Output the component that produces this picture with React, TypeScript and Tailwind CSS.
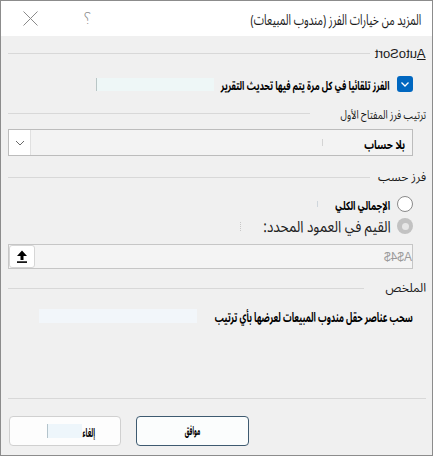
import React from "react";

const font = { fontFamily: '"Noto Sans Arabic UI", "Noto Sans Arabic", "DejaVu Sans Condensed", "DejaVu Sans", sans-serif' };
const latin = { fontFamily: '"Liberation Sans", sans-serif' };

export default function App() {
  return (
    <div
      dir="rtl"
      style={font}
      className="w-[433px] h-[456px] border border-[#8c8c8c] bg-[#f0f0f0] flex flex-col overflow-hidden"
    >
      {/* Title bar */}
      <div className="h-[35px] bg-white flex items-center justify-between pr-[11px] pl-[21px] shrink-0">
        <div className="w-[171px] shrink-0 whitespace-nowrap">
          <span className="inline-block origin-right scale-x-[0.69] text-[15px] leading-none text-[#1a1a1a]">
            المزيد من خيارات الفرز (مندوب المبيعات)
          </span>
        </div>
        <div className="flex items-center gap-[44px]" dir="ltr">
          <svg width="17" height="17" viewBox="0 0 17 17">
            <path d="M1.5 1.5 L15.5 15.5 M15.5 1.5 L1.5 15.5" stroke="#8a8a8a" strokeWidth="1" fill="none" />
          </svg>
          <span className="text-[16px] leading-none text-[#8a8a8a] font-light scale-x-[-1] inline-block" style={{ fontFamily: '"DejaVu Sans", sans-serif' }}>?</span>
        </div>
      </div>

      {/* Body */}
      <div className="flex-1 flex flex-col pr-[6px] pl-[7px]">
        {/* AutoSort header */}
        <div className="mt-[9px] flex items-center h-[16px] gap-[5px]">
          <span className="text-[13px] leading-none text-[#1a1a1a] whitespace-nowrap inline-block scale-x-[-1]" style={latin}>
            <span className="underline">A</span>utoSort
          </span>
          <div className="flex-1 h-px bg-[#d8d8d8]" />
        </div>

        {/* checkbox row */}
        <div className="mt-[15px] h-[16px] flex items-center gap-[8px] pr-[13px]">
          <div className="w-[16px] h-[16px] rounded-[3px] bg-[#0067c0] flex items-center justify-center shrink-0">
            <svg width="10" height="10" viewBox="0 0 10 10">
              <path d="M1.5 3.5 L5 7 L8.5 3.5" stroke="white" strokeWidth="1.3" fill="none" />
            </svg>
          </div>
          <div className="w-[175px] shrink-0 whitespace-nowrap">
            <span className="inline-block origin-right scale-x-[0.71] text-[12px] font-bold leading-none text-black">
              الفرز تلقائيا في كل مرة يتم فيها تحديث التقرير
            </span>
          </div>
          <div className="-mr-[8px] w-[118px] h-[13px] bg-[#eef7f7] border-l border-[#b9c6c6]" />
        </div>

        {/* header 2 */}
        <div className="mt-[13px] flex items-center h-[16px] gap-[21px]">
          <div className="w-[95px] shrink-0 whitespace-nowrap">
            <span className="inline-block origin-right scale-x-[0.77] text-[12px] leading-none text-[#1a1a1a]">
              ترتيب فرز المفتاح الأول
            </span>
          </div>
          <div className="flex-1 h-px bg-[#d8d8d8]" />
        </div>

        {/* dropdown */}
        <div className="mt-[8px] mr-[13px] h-[27px] border border-[#bcbcbc] bg-[#f3f3f3] flex items-center">
          <div className="w-[40px] mr-[7px] shrink-0 whitespace-nowrap">
            <span className="inline-block origin-right scale-x-[0.8] text-[12px] font-bold text-black leading-none">بلا حساب</span>
          </div>
          <div className="mr-[42px] w-px h-[7px] bg-[#d4d4d4]" />
          <div className="mr-auto w-[22px] h-full bg-white border-r border-[#e0e0e0] flex items-center justify-center">
            <svg width="10" height="6" viewBox="0 0 10 6">
              <path d="M1 1 L5 5 L9 1" stroke="#6a6a6a" strokeWidth="1" fill="none" />
            </svg>
          </div>
        </div>

        {/* header 3 */}
        <div className="mt-[13px] flex items-center h-[16px] gap-[8px]">
          <span className="text-[12px] leading-none text-[#1a1a1a] whitespace-nowrap">فرز حسب</span>
          <div className="flex-1 h-px bg-[#d8d8d8]" />
        </div>

        {/* radio 1 */}
        <div className="mt-[11px] h-[16px] flex items-center gap-[7px] pr-[13px]">
          <div className="w-[16px] h-[16px] rounded-full border border-[#8a8a8a] bg-white shrink-0" />
          <div className="w-[56px] shrink-0 whitespace-nowrap">
            <span className="inline-block origin-right scale-x-[0.74] text-[12px] font-bold leading-none text-black">الإجمالي الكلي</span>
          </div>
          <div className="mr-[9px] w-px h-[6px] bg-[#cfd6dc]" />
        </div>

        {/* radio 2 */}
        <div className="mt-[6px] h-[16px] flex items-center gap-[6px] pr-[13px]">
          <div className="w-[16px] h-[16px] rounded-full bg-[#c2c2c2] flex items-center justify-center shrink-0">
            <div className="w-[7px] h-[7px] rounded-full bg-[#e6e6e6]" />
          </div>
          <div className="w-[128px] shrink-0 whitespace-nowrap">
            <span className="inline-block origin-right scale-x-[0.84] text-[16px] leading-none text-[#222]">القيم في العمود المحدد:</span>
          </div>
          <div className="mr-[16px] w-px h-[9px] border-l border-dotted border-[#c8c8c8]" />
        </div>

        {/* input */}
        <div className="mt-[10px] mr-[13px] h-[25px] border border-[#c6c6c6] bg-[#f4f4f4] flex items-center justify-between">
          <span className="text-[12px] leading-none text-[#9a9a9a] pr-[3px] inline-block scale-x-[-1]" style={latin}>
            $A$4
          </span>
          <div className="w-[26px] h-full bg-white border border-[#d6d6d6] rounded-[3px] flex items-center justify-center">
            <svg width="12" height="13" viewBox="0 0 12 13">
              <path d="M6 0.5 L11 6 L7.5 6 L7.5 10 L4.5 10 L4.5 6 L1 6 Z" fill="#000" />
              <rect x="1" y="11.3" width="10" height="1.6" fill="#000" />
            </svg>
          </div>
        </div>

        {/* header 4 */}
        <div className="mt-[11px] flex items-center h-[16px] gap-[22px]">
          <span className="text-[12px] leading-none text-[#1a1a1a] whitespace-nowrap">الملخص</span>
          <div className="flex-1 h-px bg-[#d8d8d8]" />
        </div>

        {/* summary */}
        <div className="mt-[12px] h-[16px] flex items-center pr-[13px]">
          <div className="w-[216px] shrink-0 whitespace-nowrap">
            <span className="inline-block origin-right scale-x-[0.65] text-[13px] font-bold leading-none text-black">
              سحب عناصر حقل مندوب المبيعات لعرضها بأي ترتيب
            </span>
          </div>
          <div className="w-[158px] h-[14px] bg-[#f2f6fa]" />
        </div>

        <div className="flex-1" />

        {/* footer */}
        <div className="h-px bg-[#d8d8d8]" />
        <div className="mt-[17px] mb-[9px] h-[30px] flex justify-end gap-[15px] pl-[1px]">
          <button className="w-[113px] h-[30px] rounded-[4px] border border-[#3e5a70] bg-[#fbfdfd] flex items-center justify-center">
            <span className="inline-block scale-x-[0.47] text-[12px] font-bold leading-none text-black whitespace-nowrap">موافق</span>
          </button>
          <button className="w-[112px] h-[30px] rounded-[4px] border border-[#d0d0d0] bg-[#fdfdfd] flex items-center pr-[25px]">
            <div className="w-[13px] shrink-0 whitespace-nowrap">
              <span className="inline-block origin-right scale-x-[0.54] text-[12px] font-bold leading-none text-black">إلغاء</span>
            </div>
            <div className="w-[35px] h-[14px] bg-[#eef6fb] border-l border-[#b4c4cc]" />
          </button>
        </div>
      </div>
    </div>
  );
}
